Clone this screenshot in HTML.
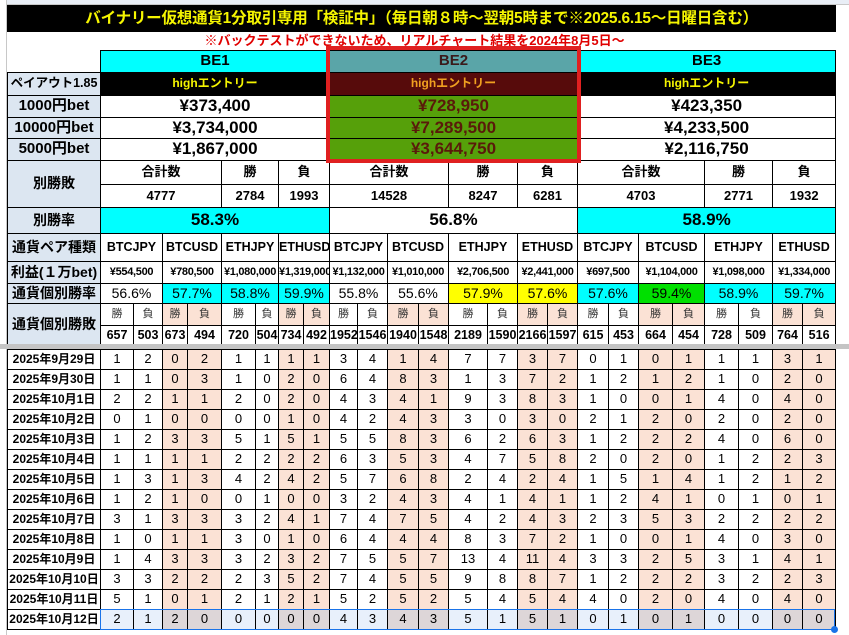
<!DOCTYPE html>
<html><head><meta charset="utf-8">
<style>
*{box-sizing:border-box;margin:0;padding:0}
body{width:849px;height:635px;overflow:hidden;background:#fff;position:relative;font-family:"Liberation Sans","Noto Sans CJK JP",sans-serif;color:#000}
.topbar{position:absolute;left:0;top:0;width:849px;height:5px;background:#e9eef6;border-bottom:1px solid #c8c8c8}
.leftbar{position:absolute;left:0;top:0;width:7px;height:635px;background:#fff;border-right:1px solid #c8c8c8}
table{border-collapse:collapse;table-layout:fixed;position:absolute;left:7px}
td{border:1px solid #000;text-align:center;vertical-align:middle;white-space:nowrap;overflow:hidden;padding:0;line-height:1.1}
.lab{background:#dce6f1;font-weight:bold;font-size:14px}
.nb{border:none}
.title{background:#000;color:#f5f500;font-weight:bold;font-size:15.5px;letter-spacing:-0.2px}
.sub{color:#e00000;font-size:13px;font-weight:bold;border:none}
.cy{background:#00ffff}
.be{font-size:15px;font-weight:bold}
.blk{background:#000;color:#f5f500;font-weight:bold;font-size:12px}
.val{font-size:17px;font-weight:bold}
.b2h{background:#5aa5a8;color:#3a1a1a}
.b2e{background:#570b0b;color:#f0a020;font-weight:bold;font-size:12px}
.b2v{background:#56a00a;color:#5a1a0a;font-size:17px;font-weight:bold}
.s13{font-size:13px;font-weight:bold}
.pr{font-size:12.5px;font-weight:bold}
.pf{font-size:11px;font-weight:bold;letter-spacing:-0.3px}
.rt{font-size:14px}
.ye{background:#ffff00}.gr{background:#00e000}
.pk{background:#fbe2d5}
.wl{font-size:11px;color:#333}
.wn{font-size:12.5px;font-weight:bold}
.dt td{font-size:13px;height:20px}
.dt td.d{background:#fff;font-weight:bold;font-size:12px}
.hl td{background:#e8f0fb}
.hl td.pk{background:#ddd6d8}
</style></head><body>
<div class="topbar"></div>
<div class="leftbar"></div>

<table style="top:5px;width:828px">
<colgroup><col style="width:93px"><col style="width:33px"><col style="width:29px"><col style="width:25px"><col style="width:34px"><col style="width:34px"><col style="width:23px"><col style="width:25px"><col style="width:26px"><col style="width:28px"><col style="width:30px"><col style="width:31px"><col style="width:30px"><col style="width:39px"><col style="width:30px"><col style="width:30px"><col style="width:30px"><col style="width:31px"><col style="width:30px"><col style="width:34px"><col style="width:32px"><col style="width:34px"><col style="width:34px"><col style="width:30px"><col style="width:33px"></colgroup>
<tr style="height:26px"><td colspan="25" class="title">バイナリー仮想通貨1分取引専用「検証中」（毎日朝８時～翌朝5時まで※2025.6.15～日曜日含む）</td></tr>
<tr style="height:19px"><td class="nb"></td><td colspan="24" class="sub" style="text-align:left;padding-left:104px">※バックテストができないため、リアルチャート結果を2024年8月5日～</td></tr>
<tr style="height:22px"><td class="nb"></td><td colspan="8" class="cy be">BE1</td><td colspan="8" class="b2h be">BE2</td><td colspan="8" class="cy be">BE3</td></tr>
<tr style="height:23px"><td class="lab" style="font-size:12.5px">ペイアウト1.85</td><td colspan="8" class="blk">highエントリー</td><td colspan="8" class="b2e">highエントリー</td><td colspan="8" class="blk">highエントリー</td></tr>
<tr style="height:22px"><td class="lab" style="font-size:15px">1000円bet</td><td colspan="8" class="val">¥373,400</td><td colspan="8" class="b2v">¥728,950</td><td colspan="8" class="val">¥423,350</td></tr>
<tr style="height:21px"><td class="lab" style="font-size:15px">10000円bet</td><td colspan="8" class="val">¥3,734,000</td><td colspan="8" class="b2v">¥7,289,500</td><td colspan="8" class="val">¥4,233,500</td></tr>
<tr style="height:22px"><td class="lab" style="font-size:15px">5000円bet</td><td colspan="8" class="val">¥1,867,000</td><td colspan="8" class="b2v">¥3,644,750</td><td colspan="8" class="val">¥2,116,750</td></tr>
<tr style="height:24px"><td class="lab" rowspan="2">別勝敗</td><td colspan="4" class="s13">合計数</td><td colspan="2" class="s13">勝</td><td colspan="2" class="s13">負</td><td colspan="4" class="s13">合計数</td><td colspan="2" class="s13">勝</td><td colspan="2" class="s13">負</td><td colspan="4" class="s13">合計数</td><td colspan="2" class="s13">勝</td><td colspan="2" class="s13">負</td></tr>
<tr style="height:23px"><td colspan="4" class="s13">4777</td><td colspan="2" class="s13">2784</td><td colspan="2" class="s13">1993</td><td colspan="4" class="s13">14528</td><td colspan="2" class="s13">8247</td><td colspan="2" class="s13">6281</td><td colspan="4" class="s13">4703</td><td colspan="2" class="s13">2771</td><td colspan="2" class="s13">1932</td></tr>
<tr style="height:26px"><td class="lab">別勝率</td><td colspan="8" class="cy val">58.3%</td><td colspan="8" class="val">56.8%</td><td colspan="8" class="cy val">58.9%</td></tr>
<tr style="height:28px"><td class="lab">通貨ペア種類</td><td colspan="2" class="pr">BTCJPY</td><td colspan="2" class="pr">BTCUSD</td><td colspan="2" class="pr">ETHJPY</td><td colspan="2" class="pr">ETHUSD</td><td colspan="2" class="pr">BTCJPY</td><td colspan="2" class="pr">BTCUSD</td><td colspan="2" class="pr">ETHJPY</td><td colspan="2" class="pr">ETHUSD</td><td colspan="2" class="pr">BTCJPY</td><td colspan="2" class="pr">BTCUSD</td><td colspan="2" class="pr">ETHJPY</td><td colspan="2" class="pr">ETHUSD</td></tr>
<tr style="height:22px"><td class="lab">利益(１万bet)</td><td colspan="2" class="pf">¥554,500</td><td colspan="2" class="pf">¥780,500</td><td colspan="2" class="pf">¥1,080,000</td><td colspan="2" class="pf">¥1,319,000</td><td colspan="2" class="pf">¥1,132,000</td><td colspan="2" class="pf">¥1,010,000</td><td colspan="2" class="pf">¥2,706,500</td><td colspan="2" class="pf">¥2,441,000</td><td colspan="2" class="pf">¥697,500</td><td colspan="2" class="pf">¥1,104,000</td><td colspan="2" class="pf">¥1,098,000</td><td colspan="2" class="pf">¥1,334,000</td></tr>
<tr style="height:20px"><td class="lab">通貨個別勝率</td><td colspan="2" class="rt">56.6%</td><td colspan="2" class="rt cy">57.7%</td><td colspan="2" class="rt cy">58.8%</td><td colspan="2" class="rt cy">59.9%</td><td colspan="2" class="rt">55.8%</td><td colspan="2" class="rt">55.6%</td><td colspan="2" class="rt ye">57.9%</td><td colspan="2" class="rt ye">57.6%</td><td colspan="2" class="rt cy">57.6%</td><td colspan="2" class="rt gr">59.4%</td><td colspan="2" class="rt cy">58.9%</td><td colspan="2" class="rt cy">59.7%</td></tr>
<tr style="height:22px"><td class="lab" rowspan="2">通貨個別勝敗</td><td class="wl">勝</td><td class="wl">負</td><td class="wl pk">勝</td><td class="wl pk">負</td><td class="wl">勝</td><td class="wl">負</td><td class="wl pk">勝</td><td class="wl pk">負</td><td class="wl">勝</td><td class="wl">負</td><td class="wl pk">勝</td><td class="wl pk">負</td><td class="wl">勝</td><td class="wl">負</td><td class="wl pk">勝</td><td class="wl pk">負</td><td class="wl">勝</td><td class="wl">負</td><td class="wl pk">勝</td><td class="wl pk">負</td><td class="wl">勝</td><td class="wl">負</td><td class="wl pk">勝</td><td class="wl pk">負</td></tr>
<tr style="height:20px"><td class="wn">657</td><td class="wn">503</td><td class="wn">673</td><td class="wn">494</td><td class="wn">720</td><td class="wn">504</td><td class="wn">734</td><td class="wn">492</td><td class="wn">1952</td><td class="wn">1546</td><td class="wn">1940</td><td class="wn">1548</td><td class="wn">2189</td><td class="wn">1590</td><td class="wn">2166</td><td class="wn">1597</td><td class="wn">615</td><td class="wn">453</td><td class="wn">664</td><td class="wn">454</td><td class="wn">728</td><td class="wn">509</td><td class="wn">764</td><td class="wn">516</td></tr>
</table>

<div style="position:absolute;left:0;top:344px;width:849px;height:5px;background:#c4c4c4"></div>

<table class="dt" style="top:349px;width:828px">
<colgroup><col style="width:93px"><col style="width:33px"><col style="width:29px"><col style="width:25px"><col style="width:34px"><col style="width:34px"><col style="width:23px"><col style="width:25px"><col style="width:26px"><col style="width:28px"><col style="width:30px"><col style="width:31px"><col style="width:30px"><col style="width:39px"><col style="width:30px"><col style="width:30px"><col style="width:30px"><col style="width:31px"><col style="width:30px"><col style="width:34px"><col style="width:32px"><col style="width:34px"><col style="width:34px"><col style="width:30px"><col style="width:33px"></colgroup>
<tr><td class="d">2025年9月29日</td><td>1</td><td>2</td><td class="pk">0</td><td class="pk">2</td><td>1</td><td>1</td><td class="pk">1</td><td class="pk">1</td><td>3</td><td>4</td><td class="pk">1</td><td class="pk">4</td><td>7</td><td>7</td><td class="pk">3</td><td class="pk">7</td><td>0</td><td>1</td><td class="pk">0</td><td class="pk">1</td><td>1</td><td>1</td><td class="pk">3</td><td class="pk">1</td></tr>
<tr><td class="d">2025年9月30日</td><td>1</td><td>1</td><td class="pk">0</td><td class="pk">3</td><td>1</td><td>0</td><td class="pk">2</td><td class="pk">0</td><td>6</td><td>4</td><td class="pk">8</td><td class="pk">3</td><td>1</td><td>3</td><td class="pk">7</td><td class="pk">2</td><td>1</td><td>2</td><td class="pk">1</td><td class="pk">2</td><td>1</td><td>0</td><td class="pk">2</td><td class="pk">0</td></tr>
<tr><td class="d">2025年10月1日</td><td>2</td><td>2</td><td class="pk">1</td><td class="pk">1</td><td>2</td><td>0</td><td class="pk">2</td><td class="pk">0</td><td>4</td><td>3</td><td class="pk">4</td><td class="pk">1</td><td>9</td><td>3</td><td class="pk">8</td><td class="pk">3</td><td>1</td><td>0</td><td class="pk">0</td><td class="pk">1</td><td>4</td><td>0</td><td class="pk">4</td><td class="pk">0</td></tr>
<tr><td class="d">2025年10月2日</td><td>0</td><td>1</td><td class="pk">0</td><td class="pk">0</td><td>0</td><td>0</td><td class="pk">1</td><td class="pk">0</td><td>4</td><td>2</td><td class="pk">4</td><td class="pk">3</td><td>3</td><td>0</td><td class="pk">3</td><td class="pk">0</td><td>2</td><td>1</td><td class="pk">2</td><td class="pk">0</td><td>2</td><td>0</td><td class="pk">2</td><td class="pk">0</td></tr>
<tr><td class="d">2025年10月3日</td><td>1</td><td>2</td><td class="pk">3</td><td class="pk">3</td><td>5</td><td>1</td><td class="pk">5</td><td class="pk">1</td><td>5</td><td>5</td><td class="pk">8</td><td class="pk">3</td><td>6</td><td>2</td><td class="pk">6</td><td class="pk">3</td><td>1</td><td>2</td><td class="pk">2</td><td class="pk">2</td><td>4</td><td>0</td><td class="pk">6</td><td class="pk">0</td></tr>
<tr><td class="d">2025年10月4日</td><td>1</td><td>1</td><td class="pk">1</td><td class="pk">1</td><td>2</td><td>2</td><td class="pk">2</td><td class="pk">2</td><td>6</td><td>3</td><td class="pk">5</td><td class="pk">3</td><td>4</td><td>7</td><td class="pk">5</td><td class="pk">8</td><td>2</td><td>0</td><td class="pk">2</td><td class="pk">0</td><td>1</td><td>2</td><td class="pk">2</td><td class="pk">3</td></tr>
<tr><td class="d">2025年10月5日</td><td>1</td><td>3</td><td class="pk">1</td><td class="pk">3</td><td>4</td><td>2</td><td class="pk">4</td><td class="pk">2</td><td>5</td><td>7</td><td class="pk">6</td><td class="pk">8</td><td>2</td><td>4</td><td class="pk">2</td><td class="pk">4</td><td>1</td><td>5</td><td class="pk">1</td><td class="pk">4</td><td>1</td><td>2</td><td class="pk">1</td><td class="pk">2</td></tr>
<tr><td class="d">2025年10月6日</td><td>1</td><td>2</td><td class="pk">1</td><td class="pk">0</td><td>0</td><td>1</td><td class="pk">0</td><td class="pk">0</td><td>3</td><td>2</td><td class="pk">4</td><td class="pk">3</td><td>4</td><td>1</td><td class="pk">4</td><td class="pk">1</td><td>1</td><td>2</td><td class="pk">4</td><td class="pk">1</td><td>0</td><td>1</td><td class="pk">0</td><td class="pk">1</td></tr>
<tr><td class="d">2025年10月7日</td><td>3</td><td>1</td><td class="pk">3</td><td class="pk">3</td><td>3</td><td>2</td><td class="pk">4</td><td class="pk">1</td><td>7</td><td>4</td><td class="pk">7</td><td class="pk">5</td><td>4</td><td>2</td><td class="pk">4</td><td class="pk">3</td><td>2</td><td>3</td><td class="pk">5</td><td class="pk">3</td><td>2</td><td>2</td><td class="pk">2</td><td class="pk">2</td></tr>
<tr><td class="d">2025年10月8日</td><td>1</td><td>0</td><td class="pk">1</td><td class="pk">1</td><td>3</td><td>0</td><td class="pk">1</td><td class="pk">0</td><td>6</td><td>4</td><td class="pk">4</td><td class="pk">4</td><td>8</td><td>3</td><td class="pk">7</td><td class="pk">2</td><td>1</td><td>0</td><td class="pk">0</td><td class="pk">1</td><td>4</td><td>0</td><td class="pk">3</td><td class="pk">0</td></tr>
<tr><td class="d">2025年10月9日</td><td>1</td><td>4</td><td class="pk">3</td><td class="pk">3</td><td>3</td><td>2</td><td class="pk">3</td><td class="pk">2</td><td>7</td><td>5</td><td class="pk">5</td><td class="pk">7</td><td>13</td><td>4</td><td class="pk">11</td><td class="pk">4</td><td>3</td><td>3</td><td class="pk">2</td><td class="pk">5</td><td>3</td><td>1</td><td class="pk">4</td><td class="pk">1</td></tr>
<tr><td class="d">2025年10月10日</td><td>3</td><td>3</td><td class="pk">2</td><td class="pk">2</td><td>2</td><td>3</td><td class="pk">5</td><td class="pk">2</td><td>7</td><td>4</td><td class="pk">5</td><td class="pk">5</td><td>9</td><td>8</td><td class="pk">8</td><td class="pk">7</td><td>1</td><td>2</td><td class="pk">2</td><td class="pk">2</td><td>3</td><td>2</td><td class="pk">2</td><td class="pk">3</td></tr>
<tr><td class="d">2025年10月11日</td><td>5</td><td>1</td><td class="pk">0</td><td class="pk">1</td><td>2</td><td>1</td><td class="pk">2</td><td class="pk">1</td><td>5</td><td>2</td><td class="pk">5</td><td class="pk">2</td><td>5</td><td>4</td><td class="pk">5</td><td class="pk">4</td><td>4</td><td>0</td><td class="pk">2</td><td class="pk">0</td><td>4</td><td>0</td><td class="pk">4</td><td class="pk">0</td></tr>
<tr class="hl"><td class="d">2025年10月12日</td><td>2</td><td>1</td><td class="pk">2</td><td class="pk">0</td><td>0</td><td>0</td><td class="pk">0</td><td class="pk">0</td><td>4</td><td>3</td><td class="pk">4</td><td class="pk">3</td><td>5</td><td>1</td><td class="pk">5</td><td class="pk">1</td><td>0</td><td>1</td><td class="pk">0</td><td class="pk">1</td><td>0</td><td>0</td><td class="pk">0</td><td class="pk">0</td></tr>
</table>

<div style="position:absolute;left:100px;top:609px;width:735px;height:21px;border:1px solid #1a73e8"></div>
<div style="position:absolute;left:831px;top:626px;width:7px;height:7px;border-radius:50%;background:#1a73e8"></div>
<div style="position:absolute;left:326px;top:46px;width:255px;height:117px;border:4px solid #e02020"></div>
</body></html>
